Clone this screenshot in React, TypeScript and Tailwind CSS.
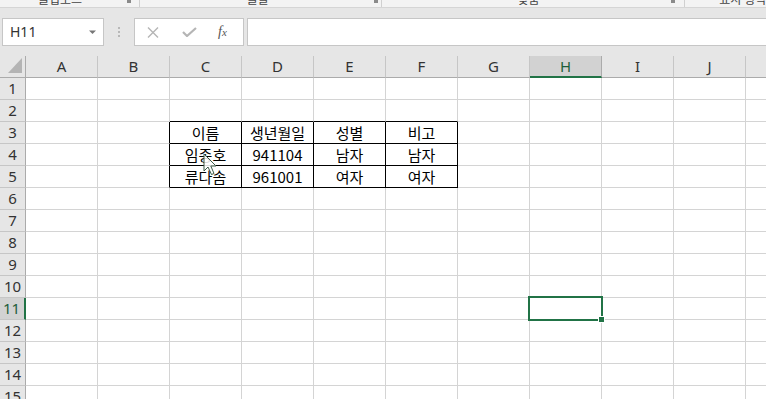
import React from "react";

const COLS = ["A", "B", "C", "D", "E", "F", "G", "H", "I", "J", "K"];
const ROWS = Array.from({ length: 15 }, (_, i) => i + 1);

const DATA: Record<string, string> = {
  C3: "이름",
  D3: "생년월일",
  E3: "성별",
  F3: "비고",
  C4: "임종호",
  D4: "941104",
  E4: "남자",
  F4: "남자",
  C5: "류다솜",
  D5: "961001",
  E5: "여자",
  F5: "여자",
};

const TABLE_COLS = ["C", "D", "E", "F"];

function cellClass(col: string, row: number): string {
  const inTable = TABLE_COLS.includes(col) && row >= 3 && row <= 5;
  const rightBlack = inTable || (col === "B" && row >= 3 && row <= 5);
  const bottomBlack = inTable || (TABLE_COLS.includes(col) && row === 2);
  return [
    "bg-white border-r border-b flex items-center justify-center relative",
    rightBlack ? "border-r-black" : "border-r-[#d4d4d4]",
    bottomBlack ? "border-b-black" : "border-b-[#d4d4d4]",
  ].join(" ");
}

function RibbonGroup({
  width,
  label,
  ml,
  launcherMr,
  last,
}: {
  width: string;
  label: string;
  ml: string;
  launcherMr: string;
  last?: boolean;
}) {
  return (
    <div className={`${width} flex items-start h-[7px] ${last ? "" : "border-r border-r-[#d0d0d0]"}`}>
      <span className={`${ml} -mt-[7px] text-[12px] leading-[12px] text-[#444] whitespace-nowrap`}>{label}</span>
      <div className="flex-1" />
      {!last && <div className={`${launcherMr} w-[4px] h-[3px] bg-[#8a8a8a]`} />}
    </div>
  );
}

export default function App() {
  return (
    <div
      className="w-[766px] h-[399px] overflow-hidden bg-white relative"
      style={{ fontFamily: '"Noto Sans", "Noto Sans CJK KR", sans-serif' }}
    >
      {/* ribbon bottom strip */}
      <div
        className="h-[8px] bg-[#f3f3f3] border-b border-b-[#d5d5d5] flex overflow-hidden"
        style={{ fontFamily: '"Noto Sans CJK KR", sans-serif' }}
      >
        <RibbonGroup width="w-[140px]" label="클립보드" ml="ml-[38px]" launcherMr="mr-[8px]" />
        <RibbonGroup width="w-[242px]" label="글꼴" ml="ml-[107px]" launcherMr="mr-[3px]" />
        <RibbonGroup width="w-[304px]" label="맞춤" ml="ml-[136px]" launcherMr="mr-[9px]" />
        <RibbonGroup width="flex-1" label="표시 형식" ml="ml-[34px]" launcherMr="" last />
      </div>

      {/* formula bar */}
      <div className="h-[48px] bg-[#e6e6e6] pt-[10px] pb-[10px] flex items-stretch">
        <div className="ml-[2px] w-[102px] h-[28px] bg-white border border-[#c6c6c6] flex items-center pl-[7px] pr-[6px]">
          <span className="text-[14px] text-[#333] leading-none">H11</span>
          <div className="flex-1" />
          <svg width="8" height="5" viewBox="0 0 8 5">
            <path d="M0 0.5 L7 0.5 L3.5 4 Z" fill="#777" />
          </svg>
        </div>
        <div className="w-[30px] flex flex-col items-center justify-center gap-[2px]">
          <div className="w-[2px] h-[2px] bg-[#b8b8b8]" />
          <div className="w-[2px] h-[2px] bg-[#b8b8b8]" />
          <div className="w-[2px] h-[2px] bg-[#b8b8b8]" />
        </div>
        <div className="w-[110px] h-[28px] bg-white border border-[#c6c6c6] flex items-center">
          <svg className="ml-[12px]" width="12" height="11" viewBox="0 0 12 11">
            <path d="M1 0.5 L11 10.5 M11 0.5 L1 10.5" stroke="#b5b5b5" strokeWidth="1.4" fill="none" />
          </svg>
          <svg className="ml-[23px]" width="15" height="10" viewBox="0 0 15 10">
            <path d="M1 5 L5 9 L14 1" stroke="#b5b5b5" strokeWidth="2.2" fill="none" />
          </svg>
          <span
            className="ml-[21px] text-[14px] italic text-[#555] leading-none"
            style={{ fontFamily: '"Liberation Serif", serif' }}
          >
            f<span className="text-[11px]">x</span>
          </span>
        </div>
        <div className="ml-[3px] flex-1 h-[28px] bg-white border border-[#c6c6c6] border-r-0" />
      </div>

      {/* sheet grid */}
      <div className="grid w-max grid-cols-[26px_repeat(11,72px)] auto-rows-[22px] text-[15px]">
        {/* corner */}
        <div className="bg-[#e6e6e6] border-r border-b border-[#ababab] relative">
          <svg className="absolute left-0 top-0" width="25" height="21" viewBox="0 0 25 21">
            <path d="M22 2 L22 17 L8 17 Z" fill="#b4b4b4" />
          </svg>
        </div>
        {COLS.map((c) =>
          c === "H" ? (
            <div
              key={c}
              className="bg-[#d2d2d2] border-r border-r-[#ababab] border-b-2 border-b-[#217346] flex items-center justify-center text-[#1d5e3a]"
            >
              {c}
            </div>
          ) : (
            <div
              key={c}
              className="bg-[#e6e6e6] border-r border-r-[#c6c6c6] border-b border-b-[#ababab] flex items-center justify-center text-[#333]"
            >
              {c}
            </div>
          )
        )}

        {ROWS.map((r) => (
          <React.Fragment key={r}>
            {r === 11 ? (
              <div className="bg-[#d2d2d2] border-r-2 border-r-[#217346] border-b border-b-[#c6c6c6] flex items-center justify-center text-[#1d5e3a] pr-[1px]">
                {r}
              </div>
            ) : (
              <div className="bg-[#e6e6e6] border-r border-r-[#ababab] border-b border-b-[#c6c6c6] flex items-center justify-center text-[#333]">
                {r}
              </div>
            )}
            {COLS.map((c) => {
              const key = `${c}${r}`;
              const text = DATA[key];
              return (
                <div key={key} className={cellClass(c, r)}>
                  {text && (
                    <span
                      className="text-[15px] text-black leading-none"
                      style={{ fontFamily: '"Noto Sans CJK KR", sans-serif' }}
                    >
                      {text}
                    </span>
                  )}
                  {key === "H11" && (
                    <div className="absolute z-10 -left-[2px] -top-[2px] w-[75px] h-[25px] border-2 border-[#217346] pointer-events-none">
                      <div className="absolute left-[68px] top-[18px] w-[7px] h-[7px] bg-[#217346] border border-white" />
                    </div>
                  )}
                </div>
              );
            })}
          </React.Fragment>
        ))}
      </div>

      {/* mouse pointer */}
      <svg className="absolute z-20 left-[203px] top-[153px]" width="15" height="24" viewBox="0 0 15 24">
        <path
          d="M1 1 L1 18 L5 14 L8.5 21.5 L11 20.5 L7.8 13 L13 13 Z"
          fill="rgba(255,255,255,0.85)"
          stroke="#3d5a46"
          strokeWidth="1"
          strokeLinejoin="round"
        />
      </svg>
    </div>
  );
}
